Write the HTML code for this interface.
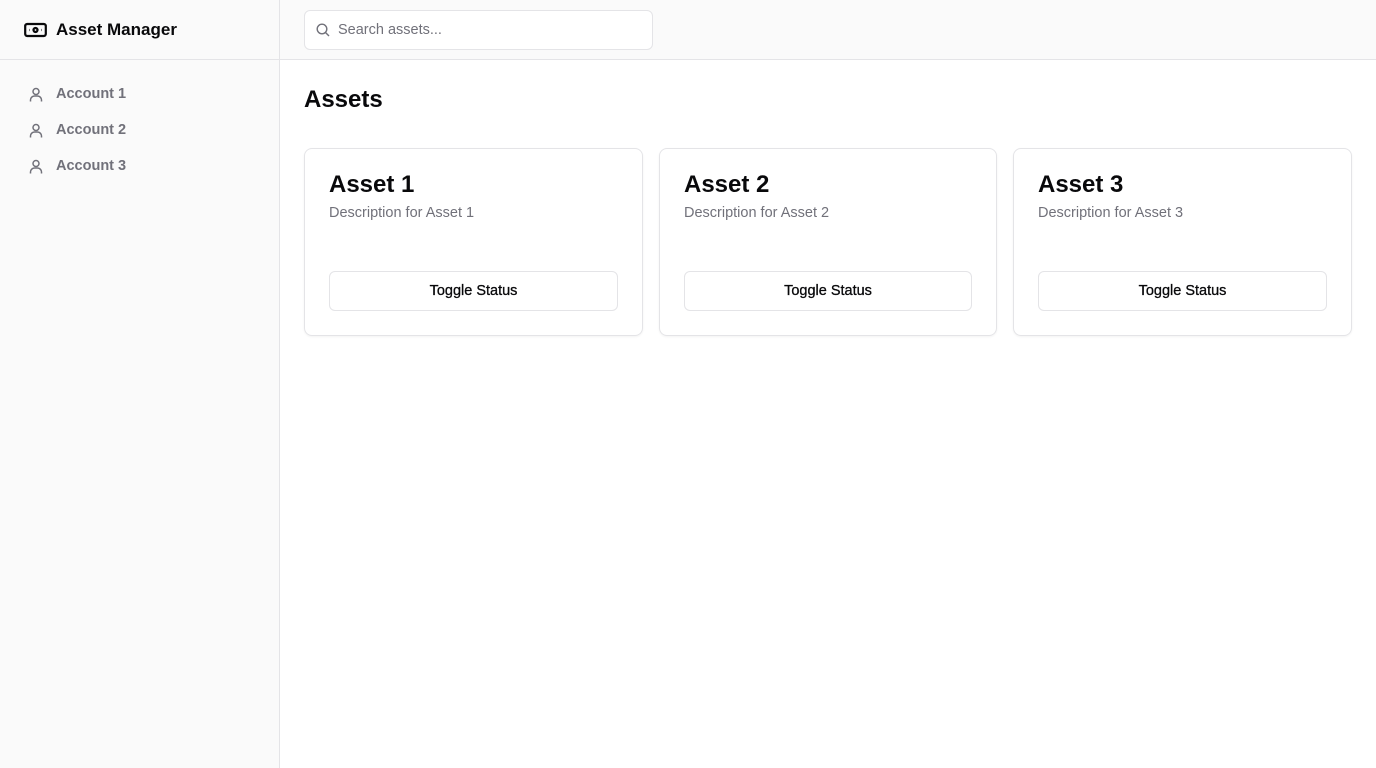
<!DOCTYPE html>
<html><head><style>
*{box-sizing:border-box;margin:0;padding:0}
body{width:1376px;height:768px;font-family:"Liberation Sans",sans-serif;background:#fff;position:relative;overflow:hidden;color:#09090b}
.side{position:absolute;left:0;top:0;width:280px;height:768px;background:#fafafa;border-right:1px solid #e4e4e7}
.brand{height:60px;border-bottom:1px solid #e4e4e7;display:flex;align-items:center;padding-left:24px;font-weight:bold;font-size:17px}
.brand svg{margin-right:9px}
.nav{padding-top:16px}
.nav div{height:36px;display:flex;align-items:center;padding-left:29px;font-size:14.5px;color:#71717a;font-weight:bold}
.nav svg{margin-right:13px}
.top{position:absolute;left:280px;top:0;right:0;height:60px;background:#fafafa;border-bottom:1px solid #e4e4e7}
.search{position:absolute;left:24px;top:10px;width:349px;height:40px;background:#fff;border:1px solid #e4e4e7;border-radius:6px;display:flex;align-items:center;padding-left:11px;font-size:14.5px;color:#71717a}
.search svg{margin-right:8px}
h1{position:absolute;left:304px;top:86px;font-size:24px;font-weight:bold}
.card{position:absolute;top:148px;width:339px;height:188px;border:1px solid #e4e4e7;border-radius:8px;padding:24px;box-shadow:0 1px 2px rgba(0,0,0,.05)}
.card h2{font-size:24px;font-weight:bold;line-height:24px;margin-top:0}
.card p{font-size:14.5px;color:#71717a;margin-top:8px}
.card button{position:absolute;left:24px;right:24px;top:122px;height:40px;background:#fff;border:1px solid #e4e4e7;border-radius:6px;font-family:inherit;font-size:14.5px;font-weight:normal;color:#09090b;-webkit-text-stroke:0.3px #09090b}
</style></head><body>
<div class="side">
<div class="brand"><svg width="23" height="16" viewBox="0 0 23 16" fill="none" stroke="#09090b" stroke-width="2.2"><rect x="1.2" y="2" width="20.6" height="12" rx="2"/><circle cx="11.5" cy="8" r="2"/><path d="M5 8h.5M17.5 8h.5"/></svg>Asset Manager</div>
<div class="nav">
<div><svg width="14" height="15" viewBox="0 0 14 15" fill="none" stroke="#71717a" stroke-width="1.5"><circle cx="7" cy="4.5" r="3"/><path d="M1.5 14.5v-1.5a4 4 0 0 1 4-4h3a4 4 0 0 1 4 4v1.5"/></svg>Account 1</div>
<div><svg width="14" height="15" viewBox="0 0 14 15" fill="none" stroke="#71717a" stroke-width="1.5"><circle cx="7" cy="4.5" r="3"/><path d="M1.5 14.5v-1.5a4 4 0 0 1 4-4h3a4 4 0 0 1 4 4v1.5"/></svg>Account 2</div>
<div><svg width="14" height="15" viewBox="0 0 14 15" fill="none" stroke="#71717a" stroke-width="1.5"><circle cx="7" cy="4.5" r="3"/><path d="M1.5 14.5v-1.5a4 4 0 0 1 4-4h3a4 4 0 0 1 4 4v1.5"/></svg>Account 3</div>
</div></div>
<div class="top"><div class="search"><svg width="14" height="14" viewBox="0 0 14 14" fill="none" stroke="#71717a" stroke-width="1.4"><circle cx="6" cy="6" r="4.8"/><path d="M9.5 9.5l3.5 3.5"/></svg>Search assets...</div></div>
<h1>Assets</h1>
<div class="card" style="left:304px"><h2>Asset 1</h2><p>Description for Asset 1</p><button>Toggle Status</button></div>
<div class="card" style="left:659px;width:338px"><h2>Asset 2</h2><p>Description for Asset 2</p><button>Toggle Status</button></div>
<div class="card" style="left:1013px"><h2>Asset 3</h2><p>Description for Asset 3</p><button>Toggle Status</button></div>
</body></html>
